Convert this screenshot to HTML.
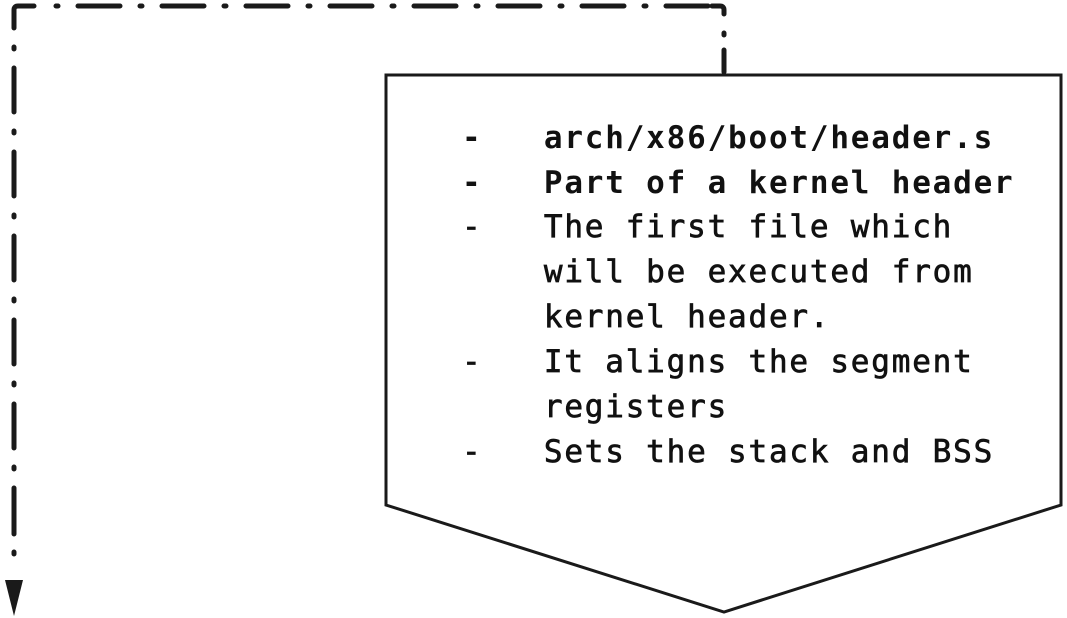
<!DOCTYPE html>
<html><head><style>
body{margin:0;width:1067px;height:618px;background:#fff;overflow:hidden;position:relative}
svg{position:absolute;left:0;top:0}
.t{position:absolute;left:0;top:0;font-family:"DejaVu Sans Mono","Liberation Mono",monospace;font-size:31px;letter-spacing:1.8px;color:#111;white-space:pre}
.l{position:absolute;line-height:45px}
.r{-webkit-text-stroke:0.7px #111}
</style></head><body>
<svg width="1067" height="618">
<g stroke="#1a1a1a" stroke-width="5" stroke-linecap="round" fill="none">
<path d="M14 28 V10 Q14 6 18 6 H34" />
<path d="M56 6 h2 M78 6 h42 M140 6 h2 M162 6 h42 M224 6 h2 M246 6 h42 M308 6 h2 M330 6 h42 M392 6 h2 M414 6 h42 M476 6 h2 M498 6 h42 M560 6 h2 M582 6 h42 M644 6 h2 M666 6 h42"/>
<path d="M712 6 H720 Q724 6 724 10 V14 M724 33 v2 M724 50 V72"/>
<path d="M14 47 v2 M14 68 v44 M14 131 v2 M14 152 v44 M14 215 v2 M14 236 v44 M14 299 v2 M14 320 v44 M14 383 v2 M14 404 v44 M14 467 v2 M14 488 v46 M14 552 v2"/>
</g>
<path d="M386 75 H1061 V505 L724 612 L386 505 Z" fill="none" stroke="#1a1a1a" stroke-width="3"/>
<path d="M5 580 L23 580 L14 616 Z" fill="#1a1a1a"/>
</svg>
<div class="t">
<div class="l" style="left:462px;top:116px;font-weight:bold">-   arch/x86/boot/header.s</div>
<div class="l" style="left:462px;top:161px;font-weight:bold">-   Part of a kernel header</div>
<div class="l r" style="left:462px;top:205px">-   The first file which
    will be executed from
    kernel header.
-   It aligns the segment
    registers
-   Sets the stack and BSS</div>
</div>
</body></html>
